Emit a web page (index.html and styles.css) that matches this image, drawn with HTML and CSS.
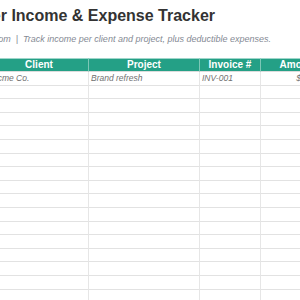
FILE: index.html
```html
<!DOCTYPE html>
<html>
<head>
<meta charset="utf-8">
<link rel="stylesheet" href="styles.css">
</head>
<body>
<div class="page">
  <h1 class="title">Freelancer Income &amp; Expense Tracker</h1>
  <p class="subtitle">hello@freelance.com &nbsp;|&nbsp; Track income per client and project, plus deductible expenses.</p>
  <table class="sheet">
    <colgroup>
      <col class="c-date"><col class="c-client"><col class="c-project"><col class="c-invoice"><col class="c-amount">
    </colgroup>
    <thead>
      <tr><th>Date</th><th>Client</th><th>Project</th><th>Invoice #</th><th>Amount</th></tr>
    </thead>
    <tbody>
      <tr><td>2024-01-05</td><td>Acme Co.</td><td>Brand refresh</td><td>INV-001</td><td class="num">$1,250.00</td></tr>
      <tr><td></td><td></td><td></td><td></td><td></td></tr>
      <tr><td></td><td></td><td></td><td></td><td></td></tr>
      <tr><td></td><td></td><td></td><td></td><td></td></tr>
      <tr><td></td><td></td><td></td><td></td><td></td></tr>
      <tr><td></td><td></td><td></td><td></td><td></td></tr>
      <tr><td></td><td></td><td></td><td></td><td></td></tr>
      <tr><td></td><td></td><td></td><td></td><td></td></tr>
      <tr><td></td><td></td><td></td><td></td><td></td></tr>
      <tr><td></td><td></td><td></td><td></td><td></td></tr>
      <tr><td></td><td></td><td></td><td></td><td></td></tr>
      <tr><td></td><td></td><td></td><td></td><td></td></tr>
      <tr><td></td><td></td><td></td><td></td><td></td></tr>
      <tr><td></td><td></td><td></td><td></td><td></td></tr>
      <tr><td></td><td></td><td></td><td></td><td></td></tr>
      <tr><td></td><td></td><td></td><td></td><td></td></tr>
      <tr><td></td><td></td><td></td><td></td><td></td></tr>
    </tbody>
  </table>
</div>
</body>
</html>
```
FILE: styles.css
```css
html, body {
  margin: 0;
  padding: 0;
  background: #ffffff;
  overflow: hidden;
}
body {
  font-family: "Liberation Sans", Arial, sans-serif;
}
.page {
  margin-left: -84px;
  padding-top: 6px;
  width: 440px;
}
.title {
  margin: 0;
  padding-left: 10px;
  font-size: 16px;
  line-height: 20px;
  font-weight: bold;
  color: #333333;
  white-space: nowrap;
}
.subtitle {
  margin: 7px 0 0;
  padding-left: 10px;
  font-size: 9px;
  line-height: 12px;
  font-style: italic;
  color: #858a94;
  white-space: nowrap;
}
.sheet {
  margin-top: 13px;
  border-collapse: separate;
  border-spacing: 0;
  table-layout: fixed;
  width: 421px;
}
.c-date { width: 74px; }
.c-client { width: 99px; }
.c-project { width: 111px; }
.c-invoice { width: 61px; }
.c-amount { width: 76px; }
.sheet th {
  height: 13.8px;
  padding: 0 2px;
  box-sizing: border-box;
  background: #24a086;
  color: #ffffff;
  font-size: 10px;
  font-weight: bold;
  text-align: center;
  border-top: 1px solid #9ed6ca;
  border-right: 1px solid #7cc7b6;
  border-bottom: 1px solid #dcdcdc;
  line-height: 12px;
  white-space: nowrap;
}
.sheet td {
  height: 13.6px;
  box-sizing: border-box;
  padding: 0 2px;
  font-size: 8.5px;
  line-height: 11px;
  font-style: italic;
  color: #707070;
  border-right: 1px solid #e6e6e6;
  border-bottom: 1px solid #e2e2e2;
  white-space: nowrap;
  overflow: hidden;
}
.sheet td.num {
  text-align: right;
}
```
